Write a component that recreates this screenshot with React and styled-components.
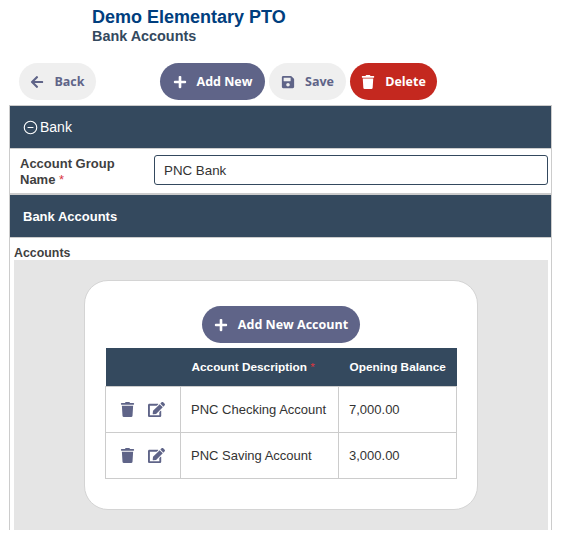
import React from "react";
import styled, { createGlobalStyle } from "styled-components";
import { FaArrowLeft, FaPlus, FaSave, FaTrash, FaEdit } from "react-icons/fa";
import { CircleMinus } from "lucide-react";

const GlobalStyle = createGlobalStyle`
  html, body {
    margin: 0;
    height: 534px;
    overflow: hidden;
    background: #fff;
    font-family: "Liberation Sans", Arial, sans-serif;
  }
`;

const Page = styled.div`
  width: 561px;
`;

const Header = styled.header`
  padding: 7px 0 0 92px;
  height: 63px;
  box-sizing: border-box;
`;

const Title = styled.h1`
  margin: 0;
  font-size: 18px;
  line-height: 20px;
  font-weight: bold;
  color: #003e7e;
`;

const Subtitle = styled.h2`
  margin: 0;
  font-size: 14.4px;
  line-height: 18px;
  font-weight: bold;
  color: #34495e;
`;

const Toolbar = styled.div`
  display: flex;
  height: 37px;
  padding-left: 19px;
  margin-bottom: 5px;
`;

const Button = styled.button`
  display: inline-flex;
  align-items: center;
  justify-content: center;
  gap: 10px;
  box-sizing: border-box;
  width: ${(p) => p.$width}px;
  height: 37px;
  margin-left: ${(p) => p.$gap || 0}px;
  padding: 0;
  border: 0;
  border-radius: 19px;
  font-family: "Open Sans", sans-serif;
  font-size: 12.5px;
  font-weight: 700;
  background: ${(p) => (p.$kind === "primary" ? "#5f6488" : p.$kind === "danger" ? "#c4281f" : "#efefef")};
  color: ${(p) => (p.$kind === "primary" || p.$kind === "danger" ? "#fff" : "#5f6488")};
  svg {
    font-size: 14px;
    flex: none;
  }
`;

const Panel = styled.main`
  width: 543px;
  margin-left: 9px;
  box-sizing: border-box;
  border: 1px solid #ccc;
  border-bottom: 0;
`;

const SectionBar = styled.div`
  display: flex;
  align-items: center;
  gap: 2px;
  height: 42px;
  box-sizing: border-box;
  padding-left: ${(p) => p.$indent}px;
  background: #34495e;
  color: #fff;
  font-size: ${(p) => (p.$bold ? 13 : 14)}px;
  font-weight: ${(p) => (p.$bold ? "bold" : "normal")};
`;

const FormRow = styled.div`
  display: flex;
  align-items: center;
  height: 47px;
  box-sizing: border-box;
  padding: 0 3px 2px 10px;
  border-top: 1px solid #ccc;
  border-bottom: 2px solid #ccc;
`;

const FieldLabel = styled.label`
  width: 134px;
  flex: none;
  box-sizing: border-box;
  padding: 4px 20px 0 0;
  font-size: 13px;
  line-height: 16px;
  font-weight: bold;
  color: #3f3f3f;
`;

const Required = styled.span`
  color: #d9363e;
  font-weight: normal;
`;

const TextInput = styled.input`
  flex: 1;
  min-width: 0;
  height: 30px;
  box-sizing: border-box;
  padding: 0 9px;
  border: 1px solid #34495e;
  border-radius: 3px;
  font-family: "Liberation Sans", Arial, sans-serif;
  font-size: 13.33px;
  color: #333;
`;

const SubLabel = styled.div`
  padding: 8px 0 0 4px;
  height: 23px;
  box-sizing: border-box;
  border-top: 1px solid #ccc;
  font-size: 12.4px;
  line-height: 15px;
  font-weight: bold;
  color: #3f3f3f;
`;

const GrayArea = styled.section`
  margin: 0 3px 0 4px;
  padding: 20px 70px;
  height: 270px;
  box-sizing: border-box;
  background: #e5e5e5;
`;

const Card = styled.div`
  display: flex;
  flex-direction: column;
  align-items: center;
  height: 230px;
  box-sizing: border-box;
  padding-top: 25px;
  background: #fff;
  border: 1px solid #d4d4d4;
  border-radius: 24px;
`;

const AccountsTable = styled.table`
  width: 351px;
  margin-top: 5px;
  border-collapse: collapse;
  table-layout: fixed;
  font-size: 13px;
  color: #333;
`;

const HeadCell = styled.th`
  height: 38px;
  padding: 0 0 0 ${(p) => p.$pad}px;
  background: #34495e;
  color: #fff;
  font-size: 11.8px;
  font-weight: bold;
  text-align: left;
`;

const Cell = styled.td`
  height: 45px;
  padding: 0 0 0 10px;
  border: 1px solid #ccc;
`;

const ActionCell = styled(Cell)`
  padding-left: 14px;
  color: #5f6488;
  svg {
    display: inline-block;
    vertical-align: middle;
  }
  svg + svg {
    margin-left: 13px;
  }
`;

const rows = [
  { name: "PNC Checking Account", balance: "7,000.00" },
  { name: "PNC Saving Account", balance: "3,000.00" },
];

const App = () => {
  return (
    <Page>
      <GlobalStyle />
      <Header>
        <Title>Demo Elementary PTO</Title>
        <Subtitle>Bank Accounts</Subtitle>
      </Header>
      <Toolbar>
        <Button $width={77}>
          <FaArrowLeft />
          Back
        </Button>
        <Button $width={105} $gap={64} $kind="primary">
          <FaPlus />
          Add New
        </Button>
        <Button $width={77} $gap={4}>
          <FaSave />
          Save
        </Button>
        <Button $width={87} $gap={4} $kind="danger">
          <FaTrash />
          Delete
        </Button>
      </Toolbar>
      <Panel>
        <SectionBar $indent={13}>
          <CircleMinus size={15} strokeWidth={1.8} />
          Bank
        </SectionBar>
        <FormRow>
          <FieldLabel>
            Account Group Name <Required>*</Required>
          </FieldLabel>
          <TextInput defaultValue="PNC Bank" />
        </FormRow>
        <SectionBar $indent={13} $bold>
          Bank Accounts
        </SectionBar>
        <SubLabel>Accounts</SubLabel>
        <GrayArea>
          <Card>
            <Button $width={158} $kind="primary">
              <FaPlus />
              Add New Account
            </Button>
            <AccountsTable>
              <colgroup>
                <col width="75" />
                <col width="158" />
                <col width="118" />
              </colgroup>
              <thead>
                <tr>
                  <HeadCell $pad={0} />
                  <HeadCell $pad={11}>
                    Account Description <Required>*</Required>
                  </HeadCell>
                  <HeadCell $pad={11}>Opening Balance</HeadCell>
                </tr>
              </thead>
              <tbody>
                {rows.map((row) => (
                  <tr key={row.name}>
                    <ActionCell>
                      <FaTrash size={15} />
                      <FaEdit size={17} />
                    </ActionCell>
                    <Cell>{row.name}</Cell>
                    <Cell>{row.balance}</Cell>
                  </tr>
                ))}
              </tbody>
            </AccountsTable>
          </Card>
        </GrayArea>
      </Panel>
    </Page>
  );
};

export default App;
